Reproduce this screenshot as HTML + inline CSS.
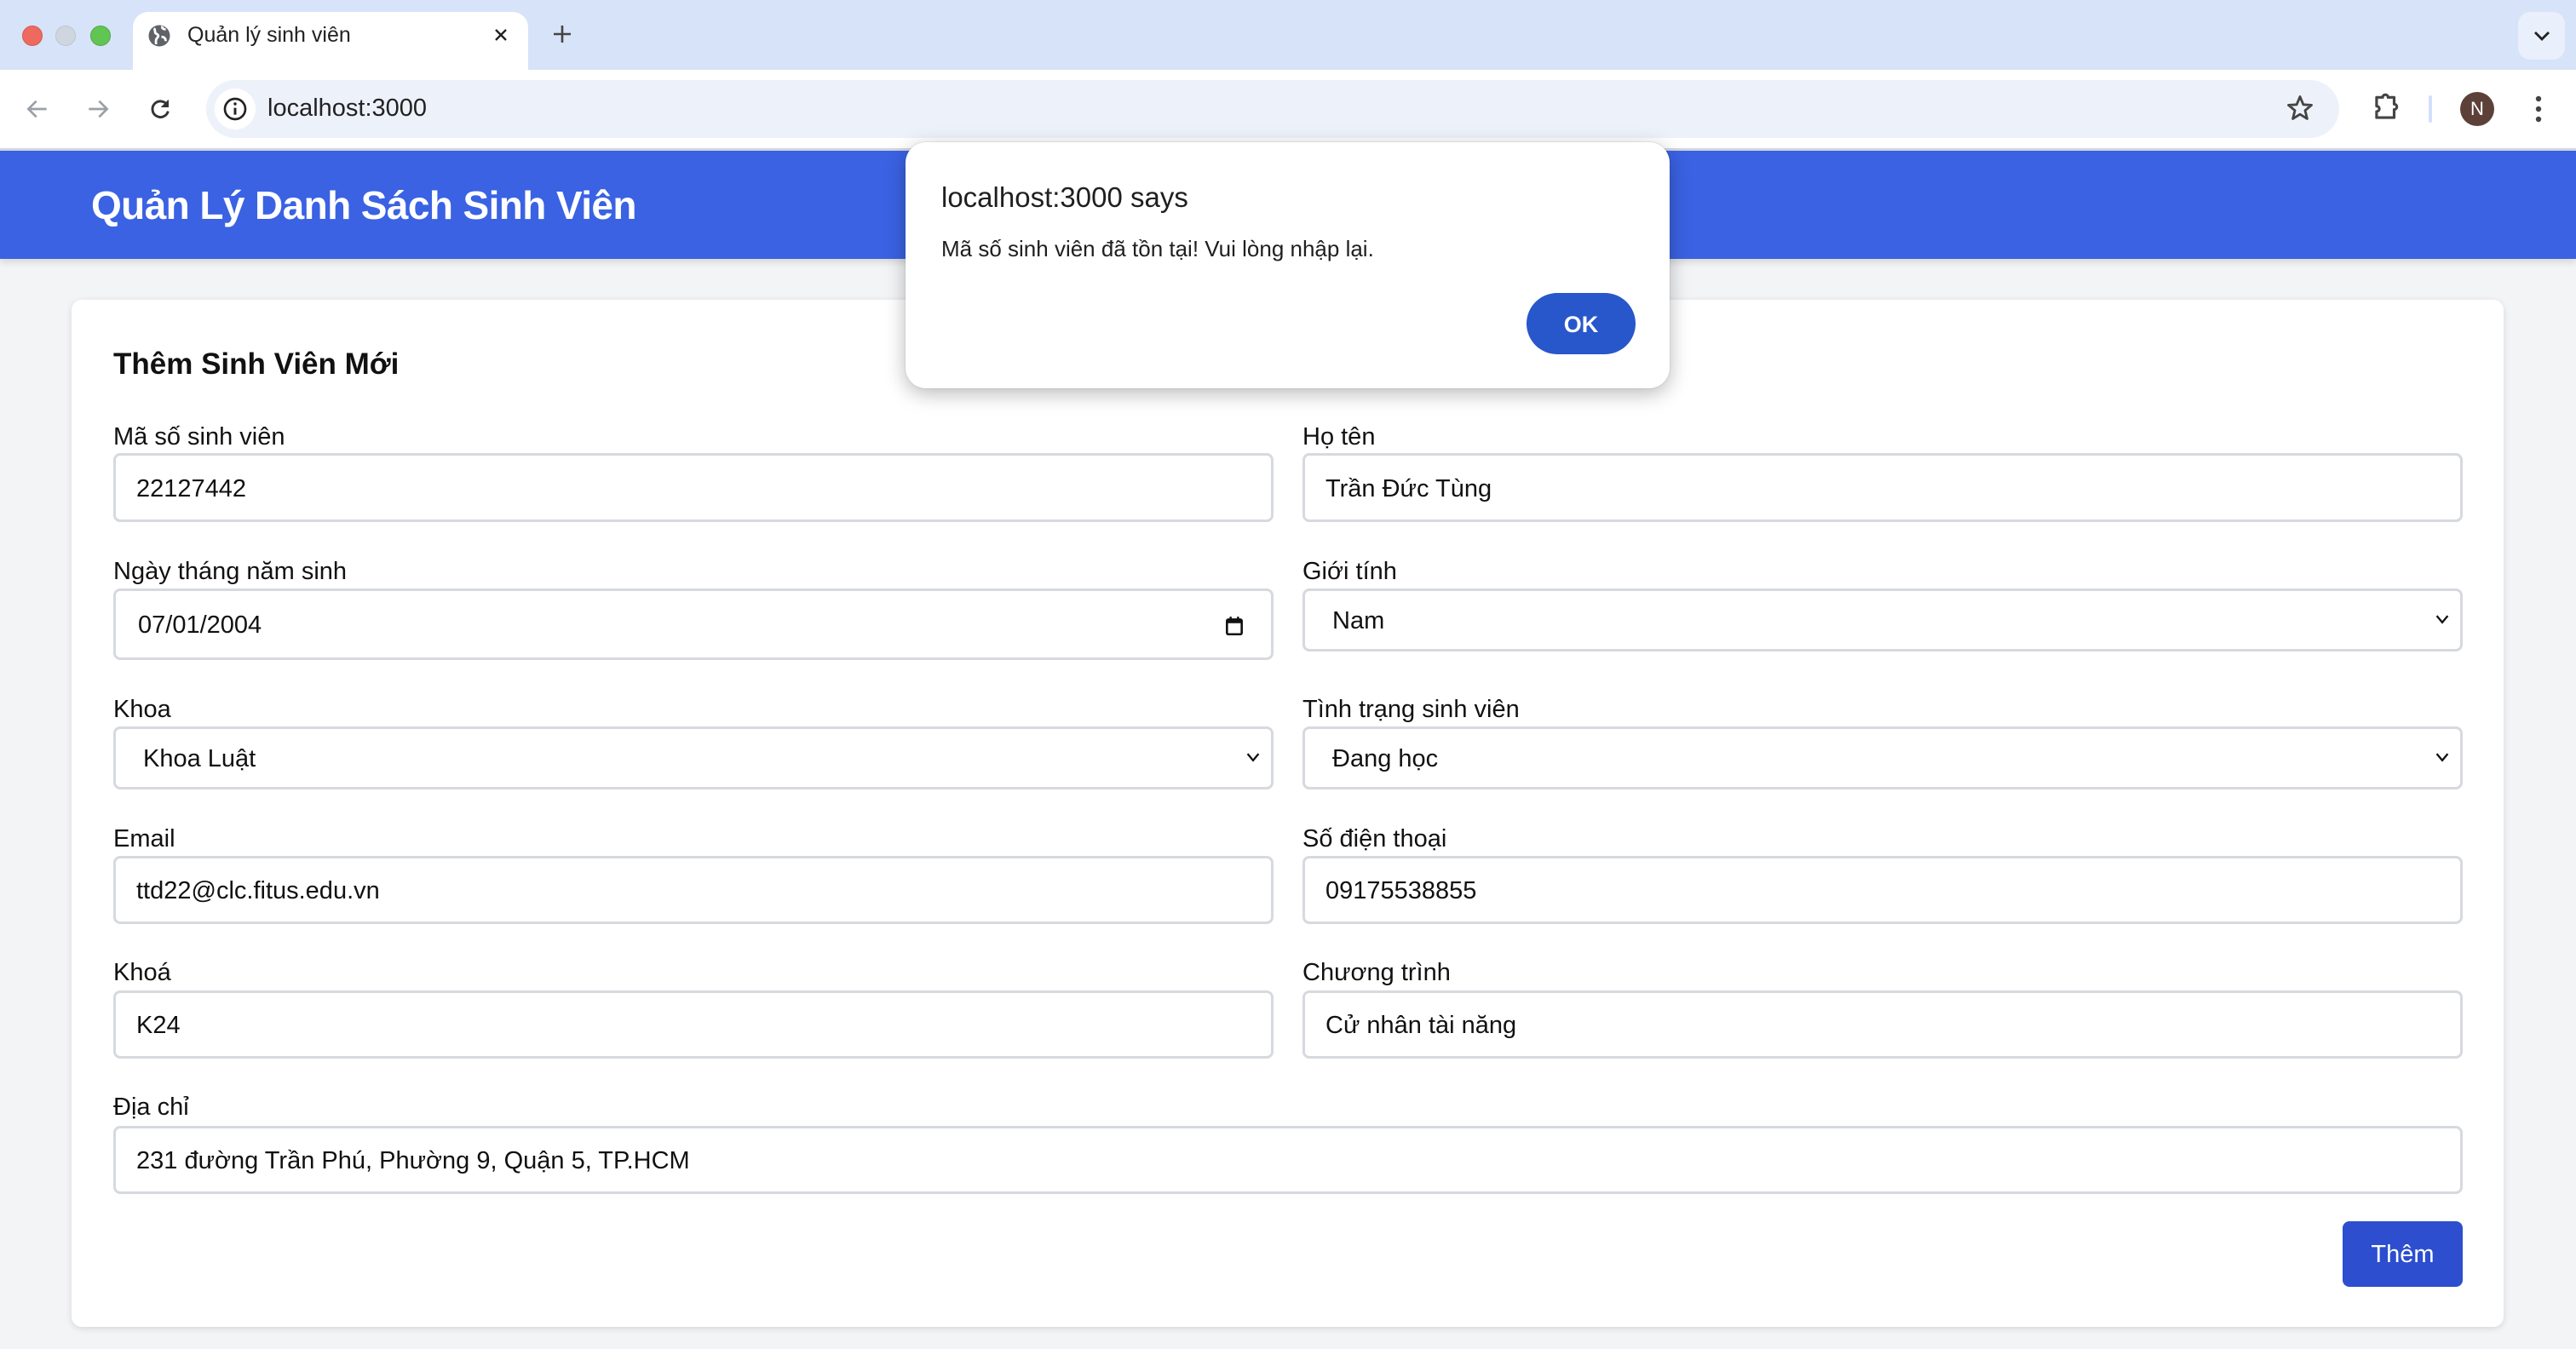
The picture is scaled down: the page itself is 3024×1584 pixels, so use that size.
<!DOCTYPE html>
<html><head><meta charset="utf-8">
<style>
*{box-sizing:border-box;margin:0;padding:0}
html,body{width:3024px;height:1584px;overflow:hidden;background:#f3f4f6;font-family:"Liberation Sans","Noto Sans CJK SC",sans-serif;color:#111}
.abs{position:absolute}
#tabbar{left:0;top:0;width:3024px;height:82px;background:#d7e3f9}
.light{width:24px;height:24px;border-radius:50%;top:30px}
#tab{left:156px;top:14px;width:464px;height:70px;background:#fff;border-radius:18px 18px 0 0}
#toolbar{left:0;top:82px;width:3024px;height:92px;background:#fff}
#tbline{left:0;top:174px;width:3024px;height:3px;background:#d5d8de}
#omni{left:242px;top:94px;width:2504px;height:68px;background:#edf2fa;border-radius:34px}
#header{left:0;top:177px;width:3024px;height:127px;background:#3a62e3;box-shadow:0 4px 8px rgba(0,0,0,.12)}
#header h1{position:absolute;left:107px;top:37px;font-size:46px;font-weight:bold;color:#fff;letter-spacing:-0.6px}
#card{left:84px;top:352px;width:2855px;height:1206px;background:#fff;border-radius:12px;box-shadow:0 2px 8px rgba(0,0,0,.12)}
.lbl{font-size:29px;color:#111;position:absolute;line-height:36px;margin-top:3px}
.inp{position:absolute;border:3px solid #d6d9de;border-radius:8px;background:#fff;font-size:29px;padding-left:24px;padding-top:3px;display:flex;align-items:center;color:#111}
.sel{padding-left:32px}
.chev{position:absolute;right:12px;top:50%;width:18px;height:18px;margin-top:-10px}
#dialog{left:1063px;top:167px;width:897px;height:289px;background:#fff;border-radius:24px;box-shadow:0 6px 24px rgba(0,0,0,.28),0 0 0 1px rgba(0,0,0,.06)}
</style></head><body>

<div id="tabbar" class="abs"></div>
<div class="abs light" style="left:26px;background:#ee6a5e;border:1px solid #d35a50"></div>
<div class="abs light" style="left:65px;background:#d0d6e0;border:1px solid #bfc5cf"></div>
<div class="abs light" style="left:106px;background:#61c554;border:1px solid #52a948"></div>
<div id="tab" class="abs"></div>
<svg class="abs" style="left:172px;top:27px" width="30" height="30" viewBox="0 0 24 24"><circle cx="12" cy="12" r="10" fill="#5f6368"/><path d="M7 5c2 2 0 4 2 5s3 2 1 4-1 5-1 6M15 3c-1 2 1 3 3 3M14 13c2 0 4 1 4 4" stroke="#fff" stroke-width="2.2" fill="none"/></svg>
<div class="abs" style="left:220px;top:27px;font-size:25px;color:#222">Quản lý sinh viên</div>
<svg class="abs" style="left:578px;top:31px" width="20" height="20" viewBox="0 0 20 20"><path d="M4 4L16 16M16 4L4 16" stroke="#222" stroke-width="2.4"/></svg>
<svg class="abs" style="left:648px;top:28px" width="24" height="24" viewBox="0 0 24 24"><path d="M12 2V22M2 12H22" stroke="#444" stroke-width="2.6"/></svg>
<div class="abs" style="left:2956px;top:14px;width:55px;height:56px;border-radius:14px;background:#e9effb"></div>
<svg class="abs" style="left:2972px;top:32px" width="24" height="20" viewBox="0 0 24 20"><path d="M4 6L12 14L20 6" stroke="#222" stroke-width="2.8" fill="none"/></svg>

<div id="toolbar" class="abs"></div>
<div id="tbline" class="abs"></div>
<svg class="abs" style="left:28px;top:112px" width="32" height="32" viewBox="0 0 24 24"><path d="M20 12H5M11 5L4 12L11 19" stroke="#9aa0a6" stroke-width="2" fill="none"/></svg>
<svg class="abs" style="left:99px;top:112px" width="32" height="32" viewBox="0 0 24 24"><path d="M4 12H19M13 5L20 12L13 19" stroke="#9aa0a6" stroke-width="2" fill="none"/></svg>
<svg class="abs" style="left:172px;top:112px" width="32" height="32" viewBox="0 0 24 24"><path d="M18.5 9A7 7 0 1 0 19 14" stroke="#333" stroke-width="2.2" fill="none"/><path d="M19 4V10H13" fill="#333" stroke="#333" stroke-width="1"/></svg>
<div id="omni" class="abs"></div>
<div class="abs" style="left:252px;top:104px;width:48px;height:48px;border-radius:50%;background:#fff"></div>
<svg class="abs" style="left:260px;top:112px" width="32" height="32" viewBox="0 0 24 24"><circle cx="12" cy="12" r="9" stroke="#222" stroke-width="2" fill="none"/><path d="M12 11V17" stroke="#222" stroke-width="2.2"/><circle cx="12" cy="7.5" r="1.3" fill="#222"/></svg>
<div class="abs" style="left:314px;top:111px;font-size:29px;color:#222">localhost:3000</div>
<svg class="abs" style="left:2682px;top:109px" width="36" height="36" viewBox="0 0 24 24"><path d="M12 3L14.6 9.2L21 9.6L16 13.8L17.6 20.3L12 16.8L6.4 20.3L8 13.8L3 9.6L9.4 9.2Z" stroke="#444" stroke-width="1.9" fill="none" stroke-linejoin="round"/></svg>
<svg class="abs" style="left:2782px;top:108px" width="38" height="38" viewBox="0 0 24 24"><path d="M5 4H9.5A2 2 0 0 1 13.5 4H18V9A2 2 0 0 1 18 13V19H5V14.5A2 2 0 0 0 5 10.5Z" stroke="#444" stroke-width="2" fill="none" stroke-linejoin="round"/></svg>
<div class="abs" style="left:2851px;top:112px;width:4px;height:32px;background:#d3e0fb;border-radius:2px"></div>
<div class="abs" style="left:2888px;top:108px;width:40px;height:40px;border-radius:50%;background:#5d4037;color:#fff;font-size:22px;text-align:center;line-height:40px">N</div>
<svg class="abs" style="left:2968px;top:108px" width="24" height="40" viewBox="0 0 24 40"><circle cx="12" cy="8" r="3.2" fill="#444"/><circle cx="12" cy="20" r="3.2" fill="#444"/><circle cx="12" cy="32" r="3.2" fill="#444"/></svg>

<div id="header" class="abs"><h1>Quản Lý Danh Sách Sinh Viên</h1></div>

<div id="card" class="abs"></div>
<div class="abs" style="left:133px;top:408px;font-size:35px;font-weight:bold;color:#111">Thêm Sinh Viên Mới</div>

<div class="lbl" style="left:133px;top:492px">Mã số sinh viên</div>
<div class="inp" style="left:133px;top:532px;width:1362px;height:81px">22127442</div>
<div class="lbl" style="left:1529px;top:492px">Họ tên</div>
<div class="inp" style="left:1529px;top:532px;width:1362px;height:81px">Trần Đức Tùng</div>

<div class="lbl" style="left:133px;top:650px">Ngày tháng năm sinh</div>
<div class="inp" style="left:133px;top:691px;width:1362px;height:84px;padding-left:26px">07/01/2004
<svg style="position:absolute;right:30px;top:28px" width="26" height="26" viewBox="0 0 24 24"><rect x="4" y="5" width="16" height="16" rx="1.5" stroke="#111" stroke-width="2.4" fill="none"/><rect x="4" y="5" width="16" height="4" fill="#111"/><path d="M8 2V6M16 2V6" stroke="#111" stroke-width="2.2"/></svg></div>
<div class="lbl" style="left:1529px;top:650px">Giới tính</div>
<div class="inp sel" style="left:1529px;top:691px;width:1362px;height:74px">Nam<svg class="chev" viewBox="0 0 14 14"><path d="M2 4L7 10L12 4" stroke="#111" stroke-width="1.8" fill="none"/></svg></div>

<div class="lbl" style="left:133px;top:812px">Khoa</div>
<div class="inp sel" style="left:133px;top:853px;width:1362px;height:74px">Khoa Luật<svg class="chev" viewBox="0 0 14 14"><path d="M2 4L7 10L12 4" stroke="#111" stroke-width="1.8" fill="none"/></svg></div>
<div class="lbl" style="left:1529px;top:812px">Tình trạng sinh viên</div>
<div class="inp sel" style="left:1529px;top:853px;width:1362px;height:74px">Đang học<svg class="chev" viewBox="0 0 14 14"><path d="M2 4L7 10L12 4" stroke="#111" stroke-width="1.8" fill="none"/></svg></div>

<div class="lbl" style="left:133px;top:964px">Email</div>
<div class="inp" style="left:133px;top:1005px;width:1362px;height:80px">ttd22@clc.fitus.edu.vn</div>
<div class="lbl" style="left:1529px;top:964px">Số điện thoại</div>
<div class="inp" style="left:1529px;top:1005px;width:1362px;height:80px">09175538855</div>

<div class="lbl" style="left:133px;top:1121px">Khoá</div>
<div class="inp" style="left:133px;top:1163px;width:1362px;height:80px">K24</div>
<div class="lbl" style="left:1529px;top:1121px">Chương trình</div>
<div class="inp" style="left:1529px;top:1163px;width:1362px;height:80px">Cử nhân tài năng</div>

<div class="lbl" style="left:133px;top:1279px">Địa chỉ</div>
<div class="inp" style="left:133px;top:1322px;width:2758px;height:80px">231 đường Trần Phú, Phường 9, Quận 5, TP.HCM</div>

<div class="abs" style="left:2750px;top:1434px;width:141px;height:77px;background:#2c4ecf;border-radius:8px;color:#fff;font-size:29px;text-align:center;line-height:79px">Thêm</div>

<div id="dialog" class="abs"></div>
<div class="abs" style="left:1105px;top:213px;font-size:33px;color:#1f1f1f">localhost:3000 says</div>
<div class="abs" style="left:1105px;top:277px;font-size:26px;color:#1f1f1f">Mã số sinh viên đã tồn tại! Vui lòng nhập lại.</div>
<div class="abs" style="left:1792px;top:344px;width:128px;height:72px;border-radius:36px;background:#2857cb;color:#fff;font-size:27px;font-weight:bold;text-align:center;line-height:74px">OK</div>

</body></html>
